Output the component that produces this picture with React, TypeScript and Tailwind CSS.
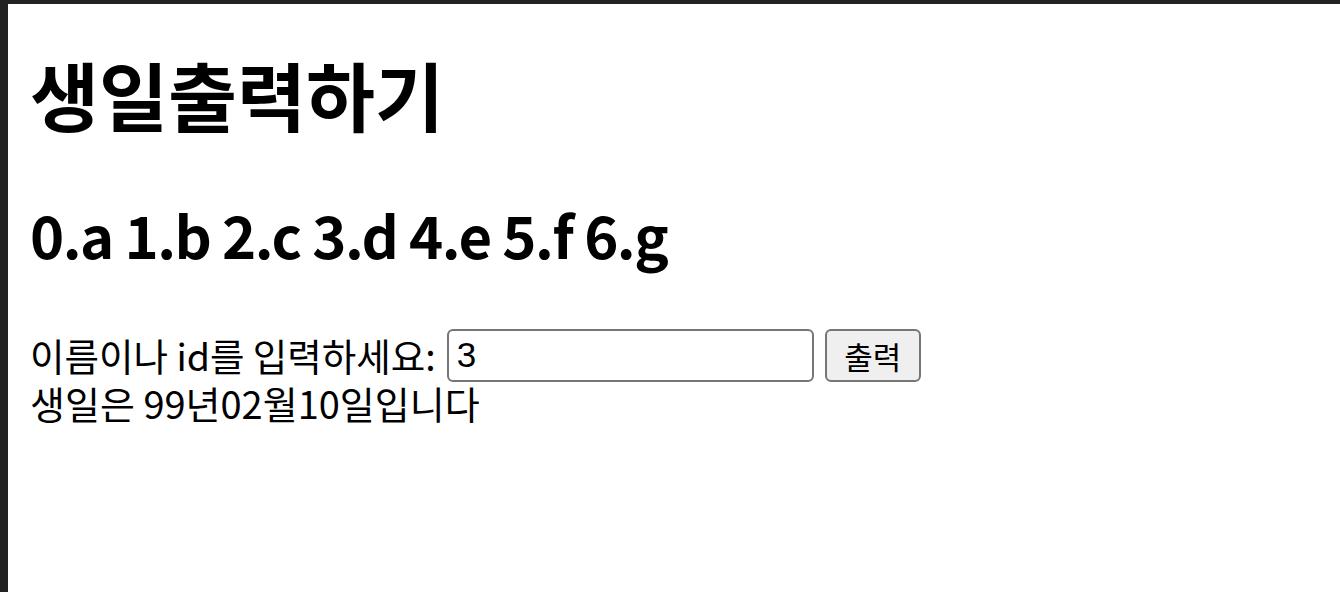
import React from "react";

export default function App() {
  const font = { fontFamily: '"Noto Sans CJK KR", "Noto Sans", sans-serif' };
  return (
    <div className="w-[1340px] h-[592px] bg-[#222222] pt-[4px] pl-[8px] overflow-hidden" style={font}>
      <div className="w-full h-full bg-white pl-[22px] text-black">
        <h1 className="text-[75px] font-bold leading-none pt-[52px]">생일출력하기</h1>
        <h2 className="text-[58px] font-bold leading-none tracking-[-1.5px] mt-[74px]">0.a 1.b 2.c 3.d 4.e 5.f 6.g</h2>
        <div className="mt-[65px] flex items-center text-[37.5px] leading-[54px]">
          <span>이름이나 id를 입력하세요:</span>
          <input
            defaultValue="3"
            className="ml-[11px] w-[367px] h-[53px] border-2 border-[#767676] rounded-[6px] px-[8px] text-[35px] outline-none"
            style={{ fontFamily: '"Liberation Sans", Arial, sans-serif' }}
          />
          <button className="ml-[11px] w-[96px] h-[53px] border-2 border-[#767676] rounded-[6px] bg-[#efefef] text-[31px] leading-none">
            출력
          </button>
        </div>
        <div className="text-[38px] leading-[42px]">생일은 99년02월10일입니다</div>
      </div>
    </div>
  );
}
